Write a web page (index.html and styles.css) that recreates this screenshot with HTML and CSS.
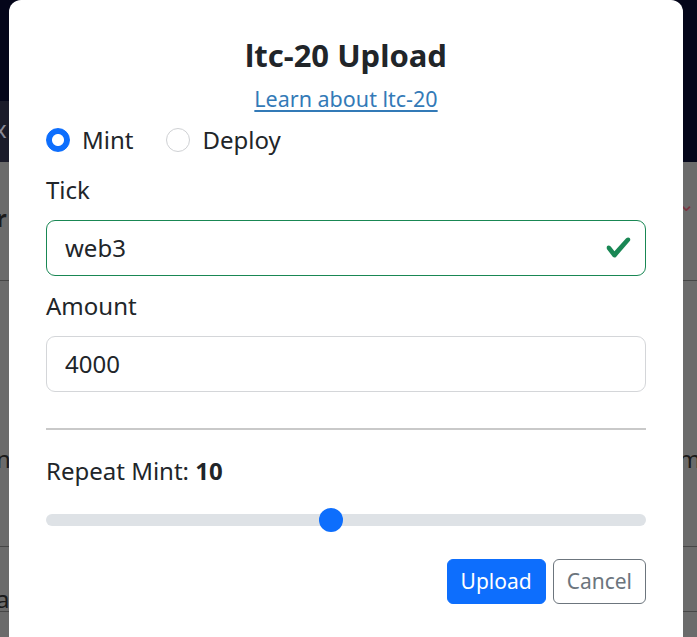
FILE: index.html
```html
<!DOCTYPE html>
<html lang="en">
  <head>
    <meta charset="UTF-8" />
    <meta name="viewport" content="width=device-width, initial-scale=1.0" />
    <title>ltc-20 Upload</title>
    <link rel="stylesheet" href="styles.css">
  </head>

  <body>
    <div class="page">
      <header class="topbar">
        <div class="side-tab">x</div>
      </header>
      <div class="list">
        <div class="list-row row-first">
          <b class="frag">r</b>
          <span class="frag-red">&#8964;</span>
        </div>
        <div class="list-row row-second">
          <span class="frag">n</span>
          <span class="frag">m</span>
        </div>
        <div class="list-row row-third">
          <span class="frag">a</span>
        </div>
      </div>
    </div>

    <div class="modal">
      <div class="modal-body">
        <h5 class="modal-title">ltc-20 Upload</h5>
        <a class="learn" href="#">Learn about ltc-20</a>

        <div class="op-choice">
          <label class="check">
            <input type="radio" name="op" checked />
            Mint
          </label>
          <label class="check">
            <input type="radio" name="op" />
            Deploy
          </label>
        </div>

        <label class="field-label" for="tick">Tick</label>
        <div class="field">
          <input class="text-input is-valid" id="tick" value="web3" />
          <svg class="valid-icon" viewBox="0 0 8 8" width="27" height="27">
            <path fill="#198754" d="M2.3 6.73.6 4.53c-.4-1.04.46-1.4 1.1-.8l1.1 1.4 3.4-3.8c.6-.63 1.6-.27 1.2.7l-4 4.6c-.43.5-.8.4-1.1.1z"/>
          </svg>
        </div>

        <label class="field-label" for="amount">Amount</label>
        <input class="text-input" id="amount" value="4000" />

        <hr class="divider" />

        <div class="repeat-label">Repeat Mint: <b>10</b></div>
        <input class="range" type="range" min="1" max="20" value="10" />

        <div class="actions">
          <button class="btn btn-primary">Upload</button>
          <button class="btn btn-outline">Cancel</button>
        </div>
      </div>
    </div>
  </body>
</html>
```

FILE: styles.css
```css
body {
  margin: 0;
  font-family: "Noto Sans", "Open Sans", sans-serif;
  color: #212529;
  overflow: hidden;
}

/* dimmed page behind the dialog */
.page {
  height: 637px;
  background-color: #6b6b6b;
}

.topbar {
  height: 162px;
  padding-top: 101px;
  box-sizing: border-box;
  background-color: #04061a;
}

.side-tab {
  width: 30px;
  height: 61px;
  background-color: #1b1c2a;
  color: #8a8b98;
  font-size: 24px;
  line-height: 56px;
  text-indent: -6px;
}

.list-row {
  display: flex;
  justify-content: space-between;
  align-items: flex-start;
  border-bottom: 1px solid #474747;
  font-size: 24px;
  line-height: 24px;
  box-sizing: border-box;
}

.row-first {
  height: 119px;
  padding-top: 44px;
}

.row-second {
  height: 266px;
  padding-top: 166px;
}

.row-third {
  padding-top: 40px;
}

.frag {
  color: #1a1a1a;
  margin: 0 -4px;
}

.frag-red {
  color: #7a3440;
  font-size: 20px;
  margin-right: 2px;
  margin-top: -14px;
}

/* dialog */
.modal {
  position: fixed;
  top: 0;
  left: 9px;
  right: 14px;
  bottom: 0;
  background-color: #ffffff;
  border-radius: 12px 12px 0 0;
}

.modal-body {
  padding: 37px 37px 0 37px;
  display: flex;
  flex-direction: column;
}

.modal-title {
  margin: 0;
  font-size: 31px;
  font-weight: 700;
  line-height: 36px;
  text-align: center;
}

.learn {
  align-self: center;
  margin-top: 10px;
  font-size: 21.5px;
  line-height: 31px;
  color: #337ab7;
  text-decoration-thickness: 1.5px;
  text-underline-offset: 3px;
}

.op-choice {
  display: flex;
  gap: 33px;
  margin-top: 8px;
  height: 36px;
  align-items: center;
}

.check {
  display: flex;
  align-items: center;
  gap: 12px;
  font-size: 24px;
  line-height: 36px;
}

.check input {
  appearance: none;
  margin: 0;
  width: 24px;
  height: 24px;
  border-radius: 50%;
  border: 1.5px solid #cfd1d4;
  background-color: #ffffff;
}

.check input:checked {
  border-color: #0d6efd;
  background: radial-gradient(circle, #ffffff 0 5.5px, #0d6efd 6.5px);
}

.field-label {
  margin-top: 14px;
  margin-bottom: 12px;
  font-size: 24px;
  line-height: 36px;
}

.field {
  position: relative;
}

.text-input {
  display: block;
  width: 100%;
  box-sizing: border-box;
  padding: 9px 18px;
  font-family: inherit;
  font-size: 24px;
  line-height: 36px;
  color: #212529;
  border: 1px solid #d4d6d9;
  border-radius: 9px;
  outline: none;
}

.text-input.is-valid {
  border-color: #198754;
  padding-right: 54px;
}

.field + .field-label {
  margin-top: 12px;
}

.valid-icon {
  position: absolute;
  right: 14px;
  top: 14px;
}

.divider {
  margin: 36px 0 0 0;
  border: none;
  border-top: 2px solid #c9c9c9;
}

.repeat-label {
  margin-top: 23px;
  font-size: 24px;
  line-height: 36px;
}

.range {
  appearance: none;
  margin: 13px 0 0 0;
  width: 100%;
  height: 36px;
  background: transparent;
}

.range::-webkit-slider-runnable-track {
  height: 12px;
  border-radius: 12px;
  background-color: #dee2e6;
}

.range::-webkit-slider-thumb {
  appearance: none;
  width: 24px;
  height: 24px;
  margin-top: -6px;
  border-radius: 50%;
  background-color: #0d6efd;
  border: none;
}

.actions {
  display: flex;
  justify-content: flex-end;
  gap: 7px;
  margin-top: 21px;
}

.btn {
  font-family: inherit;
  font-size: 21px;
  line-height: 31px;
  padding: 6px 13px;
  border-radius: 6px;
  border: 1px solid transparent;
  cursor: pointer;
}

.btn-primary {
  background-color: #0d6efd;
  border-color: #0d6efd;
  color: #ffffff;
}

.btn-outline {
  background-color: #ffffff;
  border-color: #6c757d;
  color: #6c757d;
}
```
